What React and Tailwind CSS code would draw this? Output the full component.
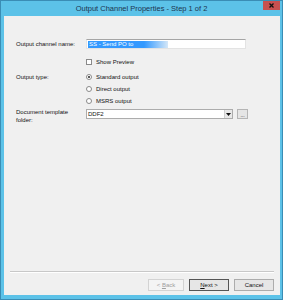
export default function App() {
  const font = { fontFamily: '"Liberation Sans", Arial, sans-serif' };
  return (
    <div className="w-[283px] h-[300px] bg-[#5cc2e8] border border-[#3a8db5] flex flex-col" style={font}>
      <div className="h-[15px] flex items-start relative">
        <div className="flex-1 text-center text-[7.5px] leading-[15px] text-[#1c3550]">Output Channel Properties - Step 1 of 2</div>
        <div className="absolute right-[2px] top-0 w-[17px] h-[9px] bg-[#c75050] flex items-center justify-center">
          <svg width="5" height="5" viewBox="0 0 5 5"><path d="M0.5 0.5L4.5 4.5M4.5 0.5L0.5 4.5" stroke="#111" strokeWidth="1.3"/></svg>
        </div>
      </div>
      <div className="ml-[3px] mr-[2px] mb-[4px] flex-1 bg-[#f0f0f0] flex flex-col text-[6px] text-[#111]">
        <div className="flex-1 pl-[12px] pr-[30px] pt-[23px]">
          <div className="flex items-center h-[10px]">
            <div className="w-[70px]">Output channel name:</div>
            <div className="w-[160px] h-[10px] bg-white border border-[#e3e3e3] border-t-[#a5a5a5] flex items-center pl-[1px]">
              <span className="w-[80px] h-[7px] leading-[7px] text-white bg-[linear-gradient(to_right,#3399ff_70%,#d4e7f8)] pl-[1px]">SS - Send PO to</span>
            </div>
          </div>
          <div className="flex items-center mt-[10px] ml-[70px] h-[6px]">
            <div className="w-[6px] h-[6px] border border-[#8a8a8a] bg-white"></div>
            <span className="ml-[4px]">Show Preview</span>
          </div>
          <div className="flex mt-[9px]">
            <div className="w-[70px] h-[6px] leading-[6px]">Output type:</div>
            <div className="flex flex-col gap-[6px]">
              {[
                ["Standard output", true],
                ["Direct output", false],
                ["MSRS output", false],
              ].map(([t, sel]) => (
                <div key={t} className="flex items-center h-[6px]">
                  <div className="w-[6px] h-[6px] rounded-full border border-[#8a8a8a] bg-white flex items-center justify-center">
                    {sel && <div className="w-[2px] h-[2px] rounded-full bg-[#222]"></div>}
                  </div>
                  <span className="ml-[4px]">{t}</span>
                </div>
              ))}
            </div>
          </div>
          <div className="flex mt-[5px]">
            <div className="w-[70px] leading-[8px] -mt-[1px]">Document template<br/>folder:</div>
            <div className="w-[147px] h-[10px] bg-white border border-[#acacac] flex items-center justify-between pl-[1px]">
              <span>DDF2</span>
              <div className="w-[8px] h-[8px] bg-[#e8e8e8] border-l border-[#cfcfcf] flex items-center justify-center">
                <svg width="5" height="3" viewBox="0 0 5 3"><path d="M0 0H5L2.5 3Z" fill="#111"/></svg>
              </div>
            </div>
            <div className="ml-[4px] w-[11px] h-[10px] bg-[#e5e5e5] border border-[#b5b5b5] flex items-end justify-center text-[5px] leading-[6px]">...</div>
          </div>
        </div>
        <div className="mx-[6px] h-px bg-[#c8c8c8] border-b border-white box-content"></div>
        <div className="h-[22px] flex items-start justify-end gap-[5px] pr-[6px] pt-[6px]">
          <div className="w-[36px] h-[12px] border border-[#d3d3d3] bg-[#f4f4f4] text-[#a0a0a0] flex items-center justify-center">&lt;&nbsp;<span className="underline">B</span>ack</div>
          <div className="w-[40px] h-[12px] border border-[#555] bg-[#e6e6e6] flex items-center justify-center"><span className="underline">N</span>ext &gt;</div>
          <div className="w-[40px] h-[12px] border border-[#acacac] bg-[#e6e6e6] flex items-center justify-center">Cancel</div>
        </div>
      </div>
    </div>
  );
}
